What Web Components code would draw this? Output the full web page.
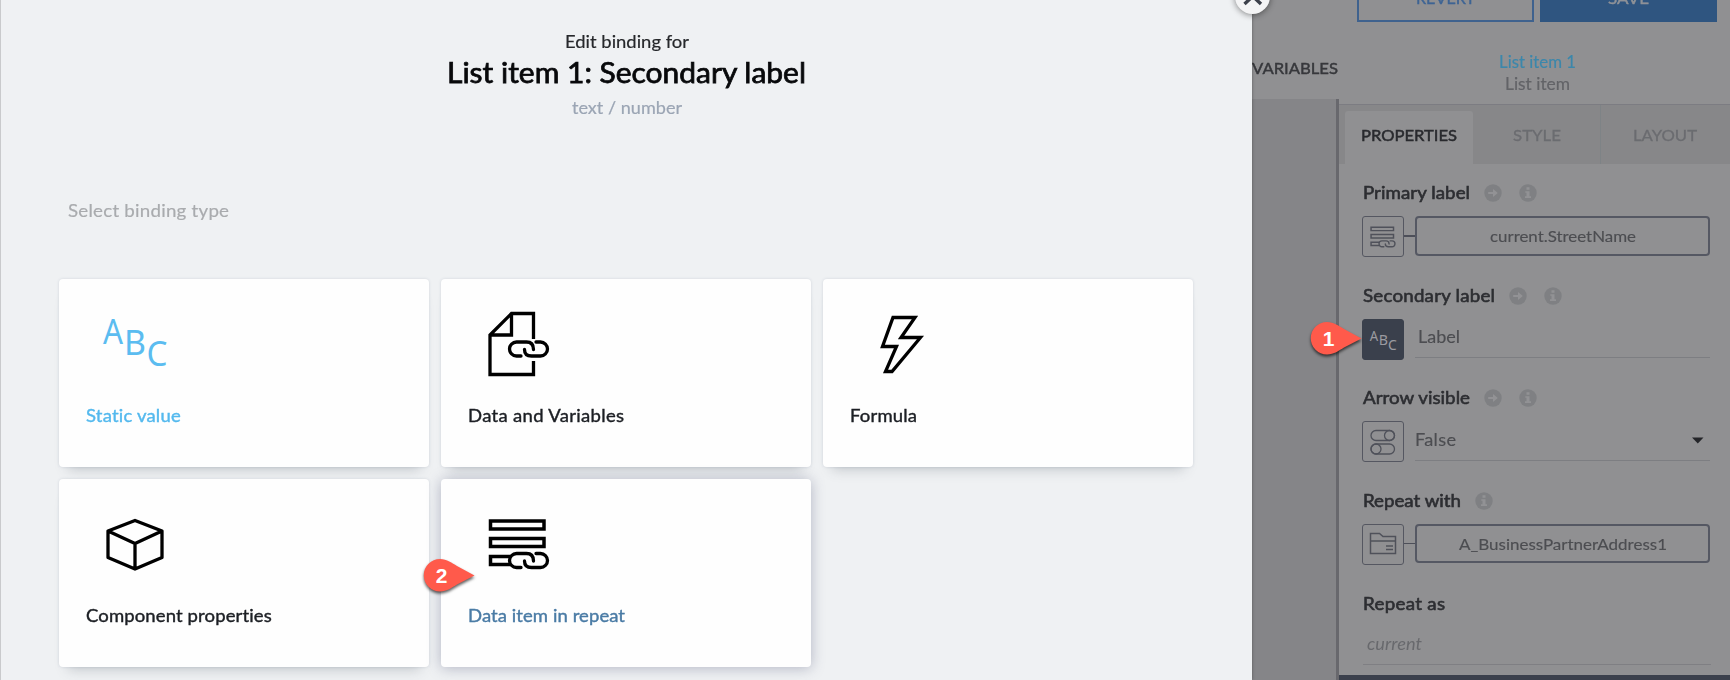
<!DOCTYPE html>
<html lang="en"><head><meta charset="utf-8"><title>Edit binding</title>
<style>html,body{margin:0;height:680px;overflow:hidden;background:#909092}body{font-family:Lato,"Liberation Sans",sans-serif}</style></head>
<body><binding-app></binding-app>
<script>
const define=(name,html,init)=>customElements.define(name,class extends HTMLElement{
  connectedCallback(){ if(this.shadowRoot)return; const r=this.attachShadow({mode:'open'}); r.innerHTML=typeof html==='function'?html(this):html; if(init)init(this,r); }
});
const a=(e,n,d='')=>e.getAttribute(n)??d;

/* Single line of text, widened or narrowed to a given width. */
define('fit-text',e=>`<style>:host{display:inline-block;white-space:nowrap;width:${a(e,'w')}px;font-size:${a(e,'size',17)}px;color:${a(e,'color','inherit')};line-height:${a(e,'lh',24)}px;font-weight:${a(e,'weight',400)};-webkit-text-stroke:${a(e,'stroke',0)}px currentColor;text-align:left}span{display:inline-block;transform-origin:0 50%}</style><span><slot></slot></span>`,(e,r)=>{
  const s=r.querySelector('span'),w=+a(e,'w'),z=e.textContent.length;
  const natural=s.getBoundingClientRect().width, scale=Math.min(w/natural,1.07);
  s.style.letterSpacing=((w/scale-natural)/(z-1||1))+'px';
  s.style.transform='scaleX('+scale+')';
});

const icons={
 abc:`<svg width="66" height="56" viewBox="0 0 66 56" fill="currentColor" font-family="Noto Sans,sans-serif" font-size="34.5"><text x="2" y="30" textLength="20" lengthAdjust="spacingAndGlyphs">A</text><text x="23" y="41" textLength="22" lengthAdjust="spacingAndGlyphs">B</text><text x="45.5" y="51.5" textLength="21" lengthAdjust="spacingAndGlyphs">C</text></svg>`,
 doc:`<svg width="64" height="66" viewBox="0 0 64 66" fill="none" stroke="currentColor" stroke-width="3.300"><path d="M46 28V2.500H24L2.500 24V63.500H46V50M24 2.500V24H2.500" transform="translate(-.5 0)"/><g transform="translate(19.500 29.500)">LINK</g></svg>`,
 bolt:`<svg width="46" height="60" viewBox="0 0 46 60" fill="none" stroke="currentColor" stroke-width="3.300"><path d="M14 2.500H36L22 22.500H41.500L13 56.500H6.500L17.500 31.500H3.500Z"/></svg>`,
 cube:`<svg width="60" height="54" viewBox="0 0 60 54" fill="none" stroke="currentColor" stroke-width="3.300" stroke-linejoin="round"><path d="M30 2.500 57 13V39.500L30 51 3 39.500V13ZM3 13 30 25.500 57 13M30 25.500V51"/></svg>`,
 repeat:`<svg width="62" height="52" viewBox="0 0 62 52" fill="none" stroke="currentColor" stroke-width="3.500"><path d="M2.500 3H56V11H2.500ZM2.500 20.500H56V28.500H2.500ZM22 38.500H2.500V46.500H22"/><g transform="translate(19.500 34)">LINK</g></svg>`,
 toggles:`<svg width="26" height="26" viewBox="0 0 26 26" fill="none" stroke="currentColor" stroke-width="1.300"><rect x="1" y="1.500" width="23.500" height="10" rx="5"/><circle cx="19.500" cy="6.500" r="5"/><rect x="1" y="15" width="23.500" height="10" rx="5"/><circle cx="6" cy="20" r="5"/></svg>`,
 folder:`<svg width="28" height="24" viewBox="0 0 28 24" fill="none" stroke="currentColor" stroke-width="1.500"><path d="M1.500 1.500H10.500L14 4.500H26.500V21.500H1.500ZM1.500 9H26.500M17 14H24M17 17.500H24"/></svg>`
};
const link=`<path stroke-width="3.300" stroke-linecap="round" d="M13.500 15.500H9A7 7 0 0 1 9 1.500H19Q26 1.500 26 9M17 9Q17 15.500 24 15.500H33A7 7 0 0 0 33 1.500H28.500"/>`;
define('ui-icon',e=>`<style>:host{display:block}svg{display:block;overflow:visible}</style>`+icons[a(e,'name')].replace('LINK',link));

define('type-card',e=>`<style>
:host{display:flex;flex-direction:column;box-sizing:border-box;background:#fefefe;border-radius:4px;padding:0 0 0 27px;box-shadow:${e.hasAttribute('hover')?'0 1px 14px rgba(75,82,115,.38)':'0 0 3px rgba(80,90,120,.18),0 11px 12px -9px rgba(70,80,90,.28)'};color:${a(e,'color','#000')}}
.pic{height:125px;box-sizing:border-box;padding:${a(e,'top')}px 0 0 ${a(e,'left')}px}
fit-text{color:${a(e,'label','#1c1f24')}}
</style><div class="pic"><ui-icon name="${a(e,'icon')}"></ui-icon></div><fit-text w="${a(e,'w')}" size="17.300" stroke=".4">${a(e,'text')}</fit-text>`);

define('close-button',`<style>:host{display:block;width:35px;height:35px;border-radius:50%;background:#f4f4f5;box-shadow:0 1px 6px rgba(0,0,0,.45)}svg{display:block}</style><svg width="35" height="35" fill="none" stroke="#3d414b" stroke-width="3.400"><path d="M9.500 9.500 26 25M26 9.500 9.500 25"/></svg>`);

define('step-marker',`<style>:host{display:block;width:54px;height:36px;position:relative;color:#fff}svg{display:block;overflow:visible;filter:drop-shadow(0 2px 1.500px rgba(0,0,0,.65))}b{position:absolute;left:0;top:0;width:37px;text-align:center;font:700 21px/34px "Liberation Sans",sans-serif}</style><svg width="54" height="36"><path fill="#ff5a4b" d="M17 0C24 0 29 4 34 7L51.500 16.500 34 25.500C29 28.500 24 32.500 17 32.500A16.200 16.200 0 0 1 17 0Z"/></svg><b><slot></slot></b>`);

define('binding-dialog',`<style>
:host{display:block;box-sizing:border-box;height:680px;width:1252px;background:#eff1f3;border-left:1px solid #c9cacc;position:relative;box-shadow:0 0 3px rgba(0,0,0,.35)}
header{display:flex;flex-direction:column;align-items:center;padding-top:29px}
.hint{padding:72px 0 0 66.500px;height:81px}
.grid{display:grid;grid-template-columns:370px 370px 370px;grid-template-rows:188px 188px;column-gap:12.400px;row-gap:12px;padding-left:57.500px}
close-button{position:absolute;right:-18px;top:-21px}
</style>
<header><fit-text w="124" size="17.800" lh="25" color="#26282b" stroke=".2">Edit binding for</fit-text><fit-text w="359" size="28" lh="36" color="#08090b" stroke=".75">List item 1: Secondary label</fit-text><fit-text w="110" size="17" lh="36" color="#9ba5b4" stroke=".2">text / number</fit-text></header>
<div class="hint"><fit-text w="161" size="17.500" lh="26" color="#a9abae" stroke=".2">Select binding type</fit-text></div>
<div class="grid">
<type-card icon="abc" text="Static value" w="95" top="35" left="15" color="#5bbcf0" label="#54b9ee"></type-card>
<type-card icon="doc" text="Data and Variables" w="156" top="32" left="20"></type-card>
<type-card icon="bolt" text="Formula" w="67" top="36" left="29"></type-card>
<type-card icon="cube" text="Component properties" w="186" top="38.5" left="19"></type-card>
<type-card icon="repeat" text="Data item in repeat" w="157" top="38.5" left="20" label="#4a7ba5" hover></type-card>
</div><close-button></close-button>`);

define('hint-dot',e=>`<style>:host{display:block}svg{display:block}</style><svg width="18" height="18"><circle cx="9" cy="9" r="8.700" fill="#7f8083"/>${a(e,'kind')==='arrow'?'<path d="M4.200 7.900H9V5L13.800 9 9 13V10.100H4.200Z" fill="#929295"/>':'<path d="M7.500 3.200H10.500V5.800H7.500ZM6.300 7.200H10.500V12.300H12V14H6V12.300H7.500V8.800H6.300Z" fill="#929295"/>'}</svg>`);

define('bind-icon',e=>`<style>:host{display:flex;box-sizing:border-box;width:42px;height:41px;align-items:center;justify-content:center;border:1.500px solid #555761;border-radius:3px;color:#4f515a}:host([active]){background:#3a404c;border-color:#3a404c;color:#9a9ba0}.s{zoom:${a(e,'scale',1)}}</style><div class="s"><ui-icon name="${a(e,'name')}"></ui-icon></div>`);

define('prop-field',e=>{
 const boxed=e.hasAttribute('boxed'),icon=a(e,'icon');
 return `<style>
:host{display:block;height:102.600px}
.label{display:flex;align-items:center;height:28px;padding-left:1px}
hint-dot{margin-right:17px}.label fit-text{margin-right:14px}
.row{display:flex;margin-top:9px;height:41px}
.wire{width:11px;height:1.500px;background:#4d4f59;margin-top:19px}
.value{box-sizing:border-box;width:295px;height:39.500px;display:flex;align-items:center}
.boxed{justify-content:center;border:2px solid #555863;border-radius:4px}
.line{border-bottom:1px solid #7d7e82;padding-left:${a(e,'indent',3)}px;padding-bottom:2px}
.line svg{margin:2px 6px 0 auto}
</style><div class="label"><fit-text w="${a(e,'lw')}" size="17.500" lh="28" color="#2d2e32" stroke=".6">${a(e,'label')}</fit-text>${e.hasAttribute('arrow')?'<hint-dot kind="arrow"></hint-dot>':''}<hint-dot kind="info"></hint-dot></div>
<div class="row"><bind-icon name="${icon}" scale="${a(e,'scale',1)}" ${e.hasAttribute('active')?'active':''}></bind-icon>
<div class="wire" style="${boxed?'':'background:none'}"></div>
<div class="value ${boxed?'boxed':'line'}"><fit-text w="${a(e,'vw')}" size="${boxed?16:17}" color="#4c4d51" stroke=".15">${a(e,'value')}</fit-text>${e.hasAttribute('select')?'<svg width="12" height="7"><path fill="#242529" d="M0 .5H11.500L5.800 6.500Z"/></svg>':''}</div></div>`});

define('inspector-panel',`<style>
:host{display:flex;flex-direction:column;box-sizing:border-box;width:478px;height:680px;background:#909092}
.actions{display:flex;gap:6px;padding-left:104.500px;height:23px}
.btn{box-sizing:border-box;width:177px;height:22px;display:flex;justify-content:center;align-items:flex-end}
.revert{border:2px solid #3f628e;border-top:0}.revert fit-text{margin-bottom:15px}.save{background:#2f5580}.save fit-text{margin-bottom:17px}
.head{display:flex;height:76px}.vars{width:86px;padding-top:33px}.names{flex:1;padding:26.500px 0 0 7px;display:flex;flex-direction:column;align-items:center}
.names fit-text+fit-text{margin-top:-1px}
.body{display:flex;flex:1}.canvas{width:84px;background:#858588;border-right:3px solid #68686d}
.panel{flex:1;display:flex;flex-direction:column;padding-top:5px}
.tabs{display:flex;height:60px;box-sizing:border-box;border-top:1px solid #7c7c82;background:#878789;padding-left:6px}
.tab{display:flex;align-items:center;justify-content:center;box-sizing:border-box}
.t1{width:128px;margin-top:6px;background:#909092;border-radius:3px 3px 0 0;padding:0 0 6px}.t2{width:128px;border-right:1px solid #7e8386}.t3{width:128px}
.fields{padding:15.200px 0 0 23px;flex:1}
.as{height:82px;width:348px;padding-left:1px}.as fit-text{display:block}.cur{padding:14px 0 0 4px;height:48px;margin-top:0;padding-top:14px;margin-bottom:0;box-sizing:border-box;height:47.500px;border-bottom:1px solid #7f7f83;font-style:italic}
.cur{margin-top:-6px;padding-top:20px;height:53.500px}
.foot{height:5px;background:#3b404c}
</style>
<div class="actions"><div class="btn revert"><fit-text w="59" size="16" lh="14" color="#3e6494" stroke=".4">REVERT</fit-text></div><div class="btn save"><fit-text w="41" size="16" lh="14" color="#8f9297" stroke=".4">SAVE</fit-text></div></div>
<div class="head"><div class="vars"><fit-text w="86" size="16" lh="24" color="#37383c" stroke=".45">VARIABLES</fit-text></div><div class="names"><fit-text w="77" size="17" lh="23" color="#3c87ab" stroke=".2">List item 1</fit-text><fit-text w="65" size="17" lh="23" color="#626367" stroke=".2">List item</fit-text></div></div>
<div class="body"><div class="canvas"></div><div class="panel">
<div class="tabs"><div class="tab t1"><fit-text w="96" size="16" color="#292a2e" stroke=".5">PROPERTIES</fit-text></div><div class="tab t2"><fit-text w="48" size="16" color="#6b6c70" stroke=".3">STYLE</fit-text></div><div class="tab t3"><fit-text w="64" size="16" color="#6b6c70" stroke=".3">LAYOUT</fit-text></div></div>
<div class="fields">
<prop-field label="Primary label" lw="107" arrow icon="repeat" scale=".42" boxed value="current.StreetName" vw="146"></prop-field>
<prop-field label="Secondary label" lw="132" arrow icon="abc" active scale=".42" value="Label" vw="42"></prop-field>
<prop-field label="Arrow visible" lw="107" arrow icon="toggles" value="False" vw="41" indent="0" select></prop-field>
<prop-field label="Repeat with" lw="98" icon="folder" boxed value="A_BusinessPartnerAddress1" vw="208"></prop-field>
<div class="as"><fit-text w="82" size="17.500" lh="28" color="#2d2e32" stroke=".6">Repeat as</fit-text><div class="cur"><fit-text w="55" size="17" color="#68696d">current</fit-text></div></div>
</div><div class="foot"></div></div></div>`);

define('binding-app',`<style>:host{display:flex;width:1730px;height:680px;position:relative;overflow:hidden}binding-dialog{flex:none;z-index:1}inspector-panel{flex:none}step-marker{position:absolute;z-index:2}.one{left:1310px;top:322px}.two{left:423px;top:559px}</style>
<binding-dialog></binding-dialog><inspector-panel></inspector-panel><step-marker class="one">1</step-marker><step-marker class="two">2</step-marker>`);
</script></body></html>
